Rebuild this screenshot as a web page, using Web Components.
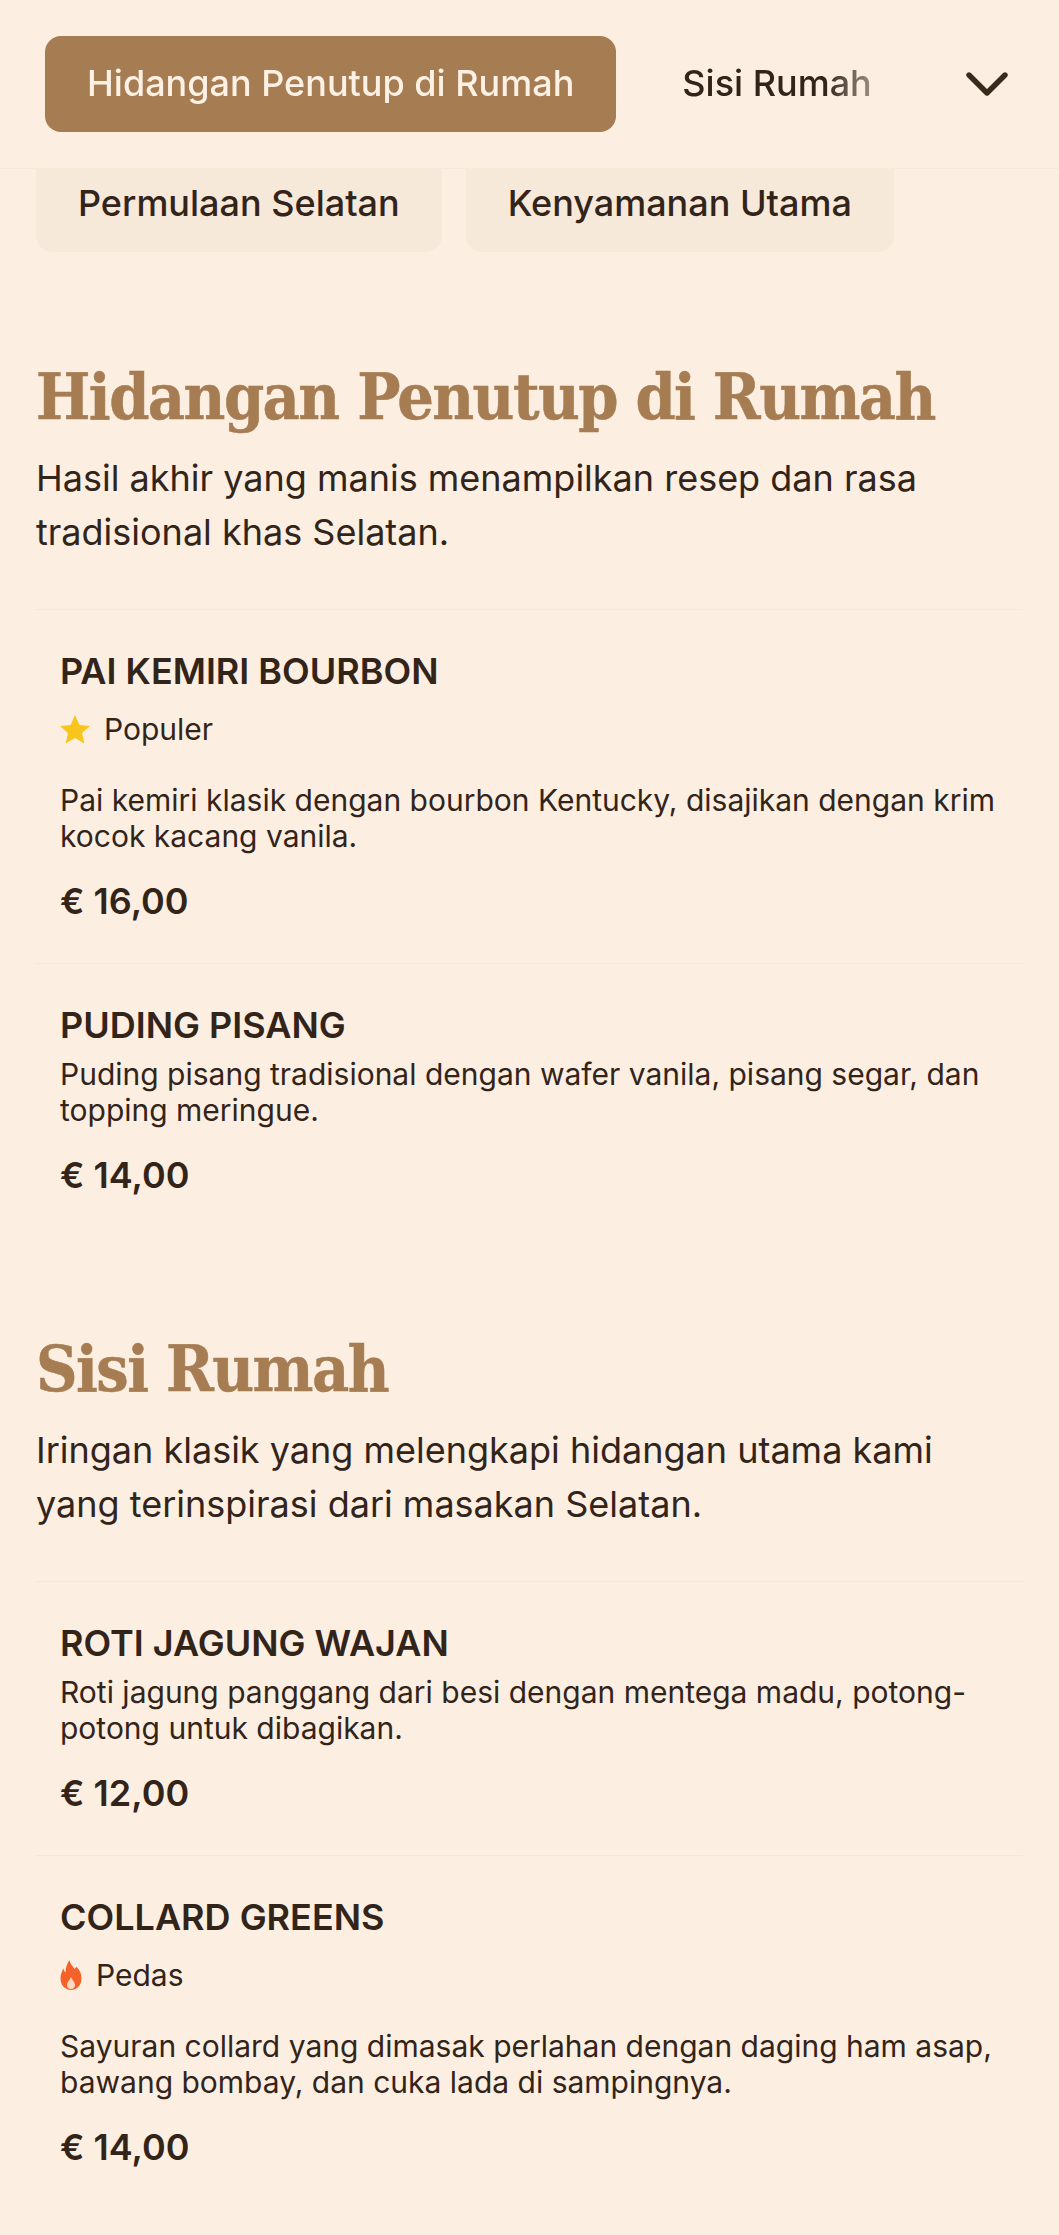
<!DOCTYPE html>
<html lang="id"><head><meta charset="utf-8"><title>Menu</title>
<style>
html,body{margin:0;padding:0;background:#fcefe2;}
body{font-family:Inter,"Noto Sans",sans-serif;color:#33241a;}
</style></head><body>
<menu-page>
  <menu-header>
    <nav-pill active>Hidangan Penutup di Rumah</nav-pill>
    <nav-pill>Sisi Rumah</nav-pill>
  </menu-header>
  <chip-row>
    <filter-chip>Permulaan Selatan</filter-chip>
    <filter-chip>Kenyamanan Utama</filter-chip>
  </chip-row>
  <menu-section heading="Hidangan Penutup di Rumah" desc="Hasil akhir yang manis menampilkan resep dan rasa tradisional khas Selatan.">
    <menu-item name="PAI KEMIRI BOURBON" price="€ 16,00" tag="star" label="Populer">Pai kemiri klasik dengan bourbon Kentucky, disajikan dengan krim kocok kacang vanila.</menu-item>
    <menu-item name="PUDING PISANG" price="€ 14,00">Puding pisang tradisional dengan wafer vanila, pisang segar, dan topping meringue.</menu-item>
  </menu-section>
  <menu-section heading="Sisi Rumah" desc="Iringan klasik yang melengkapi hidangan utama kami yang terinspirasi dari masakan Selatan.">
    <menu-item name="ROTI JAGUNG WAJAN" price="€ 12,00">Roti jagung panggang dari besi dengan mentega madu, potong-potong untuk dibagikan.</menu-item>
    <menu-item name="COLLARD GREENS" price="€ 14,00" tag="flame" label="Pedas">Sayuran collard yang dimasak perlahan dengan daging ham asap, bawang bombay, dan cuka lada di sampingnya.</menu-item>
  </menu-section>
</menu-page>
<script>
function def(name,css,html){
  customElements.define(name,class extends HTMLElement{
    constructor(){super();this.attachShadow({mode:'open'}).innerHTML='<style>'+css+'</style>'+(typeof html==='function'?'':html);}
    connectedCallback(){ if(typeof html==='function'){ this.shadowRoot.innerHTML='<style>'+css+'</style>'+html(this);} }
  });
}
def('menu-page',':host{display:block;width:1059px;height:2235px;overflow:hidden;background:#fcefe2;}','<slot></slot>');
def('menu-header',`:host{display:flex;align-items:center;position:relative;z-index:2;height:168px;background:#fcefe2;border-bottom:1px solid #f7e9da;box-sizing:content-box;}
.scroll{flex:1;min-width:0;display:flex;gap:24px;padding-left:45px;overflow:hidden;-webkit-mask-image:linear-gradient(to right,#000 calc(100% - 90px),transparent 100%);mask-image:linear-gradient(to right,#000 calc(100% - 90px),transparent 100%);}
button{all:unset;display:flex;align-items:center;justify-content:center;width:64px;height:64px;margin:0 40px;flex:none;}
svg{display:block}`,
`<div class="scroll"><slot></slot></div><button aria-label="Lainnya"><svg width="42" height="24" viewBox="0 0 42 24" fill="none" stroke="#3a2a1c" stroke-width="5.4" stroke-linecap="round" stroke-linejoin="round"><path d="M3 3 L21 21 L39 3"/></svg></button>`);
def('nav-pill',`:host{display:flex;align-items:center;flex:none;height:96px;padding:0 42px;box-sizing:border-box;border-radius:16px;font:500 36px/1.2 Inter,sans-serif;color:#33241a;white-space:nowrap;}
:host([active]){background:#a67c52;color:#fdf0e4;}`,'<slot></slot>');
def('chip-row',`:host{display:flex;gap:24px;margin:-14px 36px 13px;}`,'<slot></slot>');
def('filter-chip',`:host{display:flex;align-items:center;flex:none;height:97px;padding:0 42px;box-sizing:border-box;border-radius:16px;background:#f7e9da;font:500 36px/1.2 Inter,sans-serif;color:#33241a;white-space:nowrap;}`,'<slot></slot>');
def('menu-section',`:host{display:block;margin:0 36px;padding-top:88px;}
h2{margin:0;padding-top:3px;font:700 64px/81px "DejaVu Serif",serif;font-stretch:condensed;letter-spacing:-1.56px;-webkit-text-stroke:.5px #a67c52;white-space:nowrap;color:#a67c52;}
p{margin:14px 0 0;font:400 36px/54px Inter,sans-serif;color:#33241a;}
.items{margin-top:50px;}`,
h=>`<h2>${h.getAttribute('heading')||''}</h2><p>${h.getAttribute('desc')||''}</p><div class="items"><slot></slot></div>`);
const ICONS={
 star:`<svg width="30" height="29" viewBox="0 0 30 29"><path fill="#f8c51c" d="M15 0l4.400 10 10.600.9-8 7.100 2.400 10.600L15 23l-9.400 5.600L8 18 0 10.900 10.600 10z"/></svg>`,
 flame:`<svg width="22" height="30" viewBox="0 0 22 30"><path fill="#f4622a" d="M9.500 0C10 4 13 6 14.500 9 15.500 8 16 7.500 16.200 6.500 19.500 9.500 21.500 13.500 21.500 18.500 21.500 25 17 30 11 30 5 30 .5 25 .5 18.500 .5 14.500 2 11 3.500 8.500 4 10.500 4.500 11.500 5.500 12.500 5.500 8 7 3.500 9.500 0Z"/><path fill="#fbd9c4" d="M11 17C10 20 7 22 7 25 7 27.500 8.800 29 11 29 13.200 29 15 27.500 15 25 15 22 12 20 11 17Z"/></svg>`};
def('menu-item',`:host{display:block;border-top:1px solid #f6e8d9;padding:37px 24px 38px;}
h3{margin:0 0 7px;font:600 36px/48px Inter,sans-serif;color:#33241a;}
.tag{display:flex;align-items:center;gap:14px;height:44px;margin:12px 0 31px;font:400 30px/36px Inter,sans-serif;}
svg{display:block;flex:none}
.d{font:400 30px/36px Inter,sans-serif;color:#33241a;}
.p{margin-top:23px;font:600 36px/48px Inter,sans-serif;color:#33241a;}`,
h=>{const t=h.getAttribute('tag');return `<h3>${h.getAttribute('name')}</h3>`+(t?`<div class="tag">${ICONS[t]}<span>${h.getAttribute('label')}</span></div>`:'')+`<div class="d"><slot></slot></div><div class="p">${h.getAttribute('price')}</div>`;});
</script></body></html>
